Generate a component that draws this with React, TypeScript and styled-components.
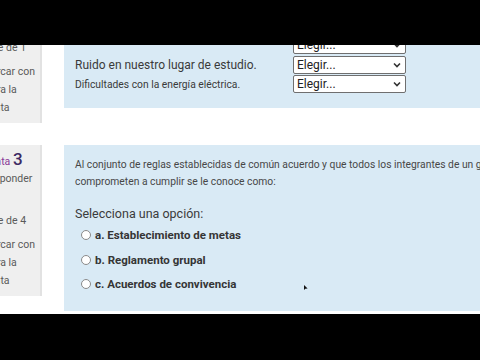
import React from 'react';
import styled, { createGlobalStyle } from 'styled-components';

const GlobalStyle = createGlobalStyle`
  html, body {
    margin: 0;
    padding: 0;
    background: #000;
    overflow: hidden;
  }
  body {
    font-family: Roboto, "Noto Sans", "Liberation Sans", sans-serif;
  }
`;

const Frame = styled.div`
  width: 480px;
  height: 360px;
  background: #000;
  display: flex;
  flex-direction: column;
`;

const BlackBar = styled.div<{ h: number }>`
  height: ${p => p.h}px;
  flex: none;
  background: #000;
`;

const Page = styled.div`
  position: relative;
  width: 480px;
  height: 269px;
  flex: none;
  background: #fff;
  overflow: clip;
`;

const Question = styled.div<{ offset: number }>`
  display: grid;
  grid-template-columns: 42px 416px;
  align-items: start;
  column-gap: 22px;
  margin-top: ${p => p.offset}px;
`;

const Info = styled.div`
  background: #efefef;
  border-right: 2px solid #e2e2e2;
  overflow: clip;
  padding: 3px 0 6px;
  color: #5a5a5a;
  font-size: 10.5px;
  line-height: 18px;
  white-space: nowrap;
`;

const InfoInner = styled.div`
  margin-left: -32px;
`;

const QNo = styled.div`
  height: 22px;
  line-height: 22px;
  color: #8a3a97;
  font-size: 10.5px;
`;

const QNum = styled.span`
  font-size: 17px;
  font-weight: 500;
  color: #3c2a63;
`;

const InfoLine = styled.div<{ gap?: number }>`
  margin-top: ${p => p.gap ?? 0}px;
`;

const FlagIcon = styled.span`
  display: inline-block;
  width: 14px;
`;

const Formulation = styled.div<{ pb: number }>`
  overflow: clip;
  background: #d9eaf5;
  padding: 11px 0 ${p => p.pb}px 11px;
  color: #3b3b3b;
`;

const QText = styled.div`
  font-size: 10.3px;
  line-height: 17px;
  color: #474747;
  white-space: nowrap;
`;

const MatchRows = styled.div`
  margin-top: 16px;
`;

const MatchRow = styled.div<{ size: number }>`
  display: grid;
  grid-template-columns: 218px 113px;
  align-items: center;
  height: 19.5px;
  font-size: ${p => p.size}px;
  color: #3a3a3a;
`;

const Select = styled.div`
  box-sizing: border-box;
  height: 18px;
  width: 113px;
  display: flex;
  align-items: center;
  justify-content: space-between;
  padding: 0 4px 0 3px;
  background: #fff;
  border: 1px solid #6f6f6f;
  border-radius: 2px;
  font-size: 12px;
  color: #222;
`;

const Prompt = styled.div`
  margin-top: 14px;
  font-size: 12.5px;
  line-height: 19px;
  color: #3b3b3b;
`;

const Option = styled.label`
  display: flex;
  align-items: center;
  height: 24.5px;
  padding-left: 6px;
  gap: 4px;
  font-size: 11.5px;
  font-weight: 700;
  color: #353535;
`;

const Radio = styled.span`
  box-sizing: border-box;
  width: 10px;
  height: 10px;
  border-radius: 50%;
  border: 1px solid #8a8a8a;
  background: #fff;
`;

const Cursor = styled.svg`
  position: absolute;
  left: 304px;
  top: 240px;
`;

const Chevron = () => (
  <svg width="8" height="6" viewBox="0 0 8 6">
    <path d="M1 1.5 L4 4.5 L7 1.5" fill="none" stroke="#333" strokeWidth="1.6" />
  </svg>
);

const Sidebar: React.FC<{ num: number; score: number }> = ({ num, score }) => (
  <Info>
    <InfoInner>
      <QNo>
        Pregunta <QNum>{num}</QNum>
      </QNo>
      <InfoLine>Sin responder</InfoLine>
      <InfoLine>aún</InfoLine>
      <InfoLine gap={6}>Puntaje de {score}</InfoLine>
      <InfoLine gap={6}>
        <FlagIcon />
        Marcar con
      </InfoLine>
      <InfoLine>bandera la</InfoLine>
      <InfoLine>pregunta</InfoLine>
    </InfoInner>
  </Info>
);

const matches = [
  { label: '', size: 11 },
  { label: '', size: 11 },
  { label: 'Ruido en nuestro lugar de estudio.', size: 12 },
  { label: 'Dificultades con la energía eléctrica.', size: 10.3 },
];

const options = [
  'a. Establecimiento de metas',
  'b. Reglamento grupal',
  'c. Acuerdos de convivencia',
];

export default function App() {
  return (
    <Frame>
      <GlobalStyle />
      <BlackBar h={45} />
      <Page>
        <Question offset={-73}>
          <Sidebar num={2} score={1} />
          <Formulation pb={14}>
            <QText>Relaciona cada situación con la estrategia para resolverla.</QText>
            <MatchRows>
              {matches.map((m, i) => (
                <MatchRow key={i} size={m.size}>
                  <span>{m.label}</span>
                  <Select>
                    <span>Elegir...</span>
                    <Chevron />
                  </Select>
                </MatchRow>
              ))}
            </MatchRows>
          </Formulation>
        </Question>

        <Question offset={22}>
          <Sidebar num={3} score={4} />
          <Formulation pb={14}>
            <QText>
              Al conjunto de reglas establecidas de común acuerdo y que todos los integrantes de un grupo se
              <br />
              comprometen a cumplir se le conoce como:
            </QText>
            <Prompt>Selecciona una opción:</Prompt>
            {options.map(o => (
              <Option key={o}>
                <Radio />
                {o}
              </Option>
            ))}
          </Formulation>
        </Question>

        <Cursor width="4" height="5" viewBox="0 0 4 5">
          <path d="M0 0 L0 5 L1.3 3.8 L3.6 3.6 Z" fill="#111" />
        </Cursor>
      </Page>
      <BlackBar h={46} />
    </Frame>
  );
}
